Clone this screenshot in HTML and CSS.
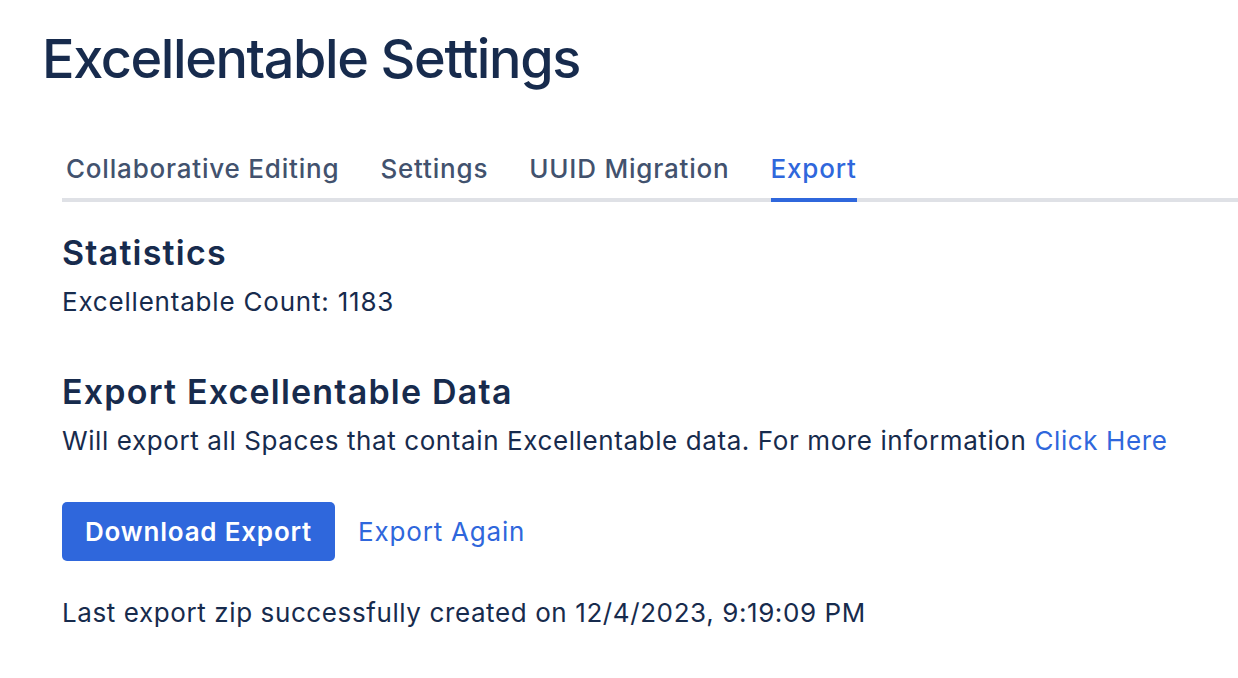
FILE: index.html
```html
<!DOCTYPE html>
<html lang="en">
<head>
  <meta charset="UTF-8">
  <meta name="viewport" content="width=device-width, initial-scale=1.0">
  <title>Excellentable Settings</title>
  <link rel="stylesheet" href="styles.css">
</head>
<body>
  <div class="page">
    <h1 class="page-title">Excellentable Settings</h1>
    <div class="content">
      <div class="tabs">
        <a class="tab">Collaborative Editing</a>
        <a class="tab">Settings</a>
        <a class="tab">UUID Migration</a>
        <a class="tab active">Export</a>
      </div>

      <h2 class="section-title stats-title">Statistics</h2>
      <p class="count">Excellentable Count: 1183</p>

      <h2 class="section-title export-title">Export Excellentable Data</h2>
      <p class="info">Will export all Spaces that contain Excellentable data. For more information <a class="link" href="#">Click Here</a></p>

      <div class="actions">
        <button class="btn-primary">Download Export</button>
        <a class="link export-again" href="#">Export Again</a>
      </div>

      <p class="last-export">Last export zip successfully created on 12/4/2023, 9:19:09 PM</p>
    </div>
  </div>
</body>
</html>
```

FILE: styles.css
```css
body {
  margin: 0;
  font-family: Inter, "Noto Sans", sans-serif;
  color: #172b4d;
  background: #fff;
}

.page {
  padding: 27px 0 0 42px;
}

.page-title {
  margin: 0;
  font-size: 54px;
  line-height: 64px;
  font-weight: 500;
  letter-spacing: -1.4px;
}

.content {
  padding-left: 20px;
  margin-top: 62px;
}

.tabs {
  display: flex;
  gap: 41px;
  padding-left: 4px;
  border-bottom: 4px solid #dfe1e6;
}

.tab {
  font-size: 26px;
  line-height: 32px;
  font-weight: 500;
  letter-spacing: 0.8px;
  color: #42526e;
  padding-bottom: 13px;
  margin-bottom: -4px;
  border-bottom: 4px solid transparent;
  cursor: pointer;
}

.tab.active {
  color: #2f67dc;
  border-bottom-color: #2f67dc;
}

.section-title {
  margin: 0;
  font-size: 34px;
  line-height: 36px;
  font-weight: 600;
  letter-spacing: 1.2px;
}

.stats-title {
  margin-top: 33px;
}

.export-title {
  margin-top: 56px;
}

.count,
.info,
.last-export {
  margin: 0;
  font-size: 26px;
  line-height: 32px;
  letter-spacing: 0.6px;
}

.count {
  margin-top: 15px;
  letter-spacing: 0.8px;
}

.info {
  margin-top: 15px;
}

.link {
  color: #2f67dc;
  text-decoration: none;
}

.actions {
  display: flex;
  align-items: center;
  gap: 23px;
  margin-top: 45px;
}

.btn-primary {
  font-family: inherit;
  font-size: 26px;
  line-height: 33px;
  font-weight: 600;
  letter-spacing: 0.8px;
  color: #fff;
  background: #2f67dc;
  border: none;
  border-radius: 5px;
  padding: 13px 23px;
  cursor: pointer;
}

.export-again {
  font-size: 26px;
  line-height: 32px;
  letter-spacing: 0.8px;
}

.last-export {
  margin-top: 36px;
}
```
